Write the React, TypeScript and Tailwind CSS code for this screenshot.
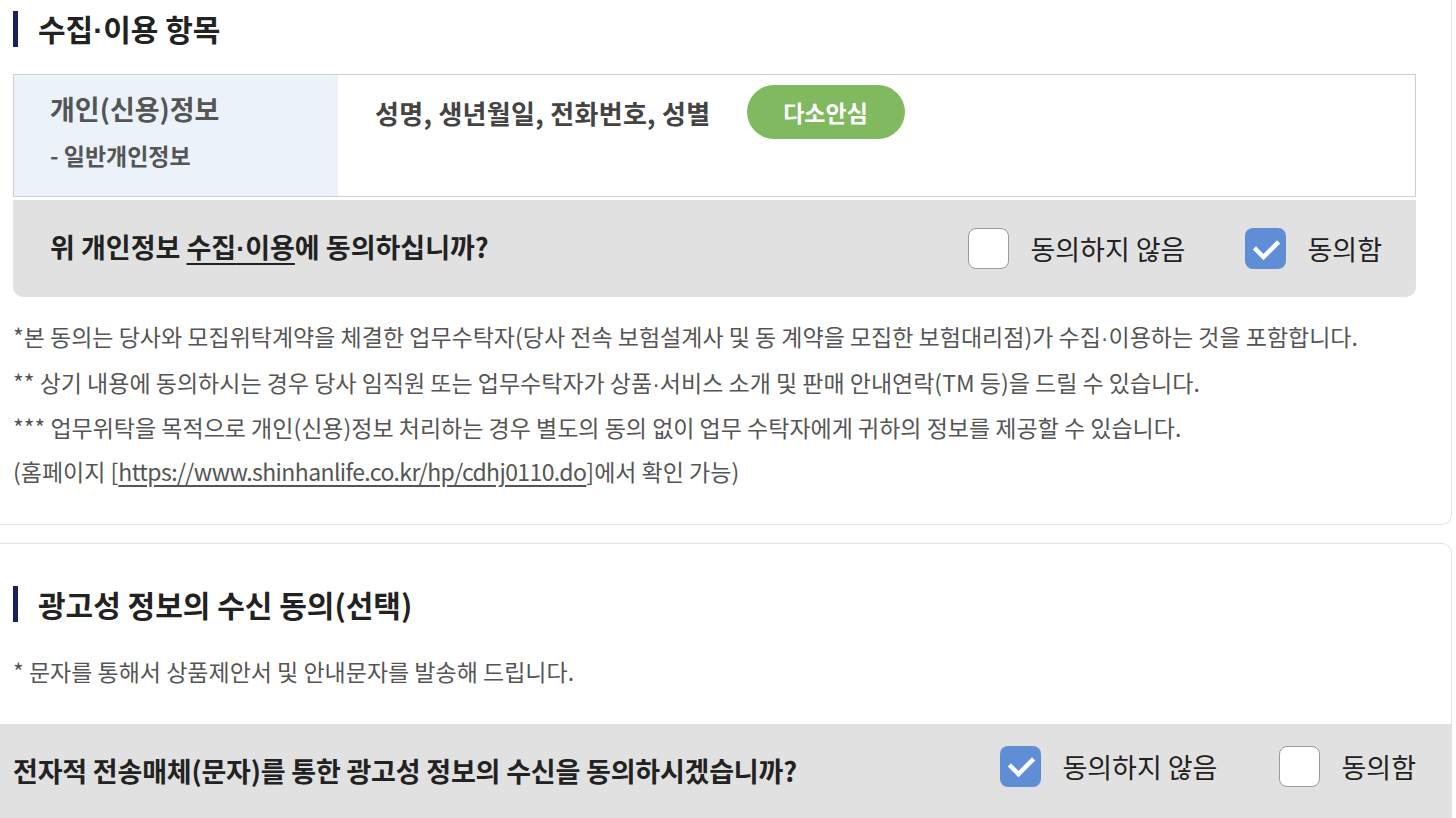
import React from 'react';

function Dot() {
  return <span className="font-['Liberation_Sans',sans-serif]">·</span>;
}

function CheckBox({ checked }: { checked: boolean }) {
  if (checked) {
    return (
      <span className="flex h-[41px] w-[41px] shrink-0 items-center justify-center rounded-[8px] bg-[#608ed6]">
        <svg className="h-[30px] w-[30px]" viewBox="0 0 30 30" fill="none" stroke="#ffffff" strokeWidth={4.5} strokeLinecap="square">
          <path d="M5 15.5l7.5 7.5L26 9.5" />
        </svg>
      </span>
    );
  }
  return <span className="h-[41px] w-[41px] shrink-0 rounded-[8px] border border-[#9a9a9a] bg-white" />;
}

function ConsentOption({ checked, label }: { checked: boolean; label: string }) {
  return (
    <label className="flex items-center gap-[21px]">
      <CheckBox checked={checked} />
      <span className="text-[27px] leading-none text-[#222]">{label}</span>
    </label>
  );
}

function SectionTitle({ children }: { children: React.ReactNode }) {
  return (
    <div className="flex items-center gap-[20px]">
      <span className="h-[36px] w-[5px] bg-[#1b1f5f]" />
      <h2 className="text-[30px] font-bold leading-none text-[#222]">{children}</h2>
    </div>
  );
}

export default function App() {
  return (
    <div className="h-[818px] w-full overflow-hidden bg-white font-['Noto_Sans_CJK_KR','Noto_Sans',sans-serif]">
      {/* 수집·이용 항목 */}
      <section className="mr-[4px] rounded-br-[10px] border-r border-b border-[#e3e3e3] pt-[11px] pb-[30px] pl-[13px] pr-[35px]">
        <SectionTitle>
          수집<Dot />이용 항목
        </SectionTitle>

        <div className="mt-[27px] flex h-[123px] border border-[#cfcfcf]">
          <div className="w-[324px] bg-[#ebf2fa] pl-[36px] pt-[17px]">
            <p className="text-[27px] font-bold leading-[34px] text-[#555]">개인(신용)정보</p>
            <p className="mt-[14px] text-[23px] font-bold leading-[30px] text-[#555]">- 일반개인정보</p>
          </div>
          <div className="flex items-start pl-[37px] pt-[10px]">
            <div className="flex items-center gap-[36px]">
              <span className="text-[26px] font-bold tracking-[0.3px] text-[#444]">성명, 생년월일, 전화번호, 성별</span>
              <span className="flex h-[54px] w-[158px] items-center justify-center rounded-full bg-[#80b960] text-[23px] font-bold text-white">
                다소안심
              </span>
            </div>
          </div>
        </div>

        <div className="mt-[3px] flex h-[97px] items-center justify-between rounded-b-[10px] bg-[#e1e1e1] pl-[37px] pr-[34px]">
          <p className="text-[27px] font-bold text-[#222]">
            위 개인정보{' '}
            <span className="underline decoration-[2px] underline-offset-[5px]">
              수집<Dot />이용
            </span>
            에 동의하십니까?
          </p>
          <div className="flex items-center gap-[60px]">
            <ConsentOption checked={false} label="동의하지 않음" />
            <ConsentOption checked={true} label="동의함" />
          </div>
        </div>

        <div className="mt-[18px] text-[23px] leading-[43.7px] text-[#555]">
          <p>
            *본 동의는 당사와 모집위탁계약을 체결한 업무수탁자(당사 전속 보험설계사 및 동 계약을 모집한 보험대리점)가 수집<Dot />이용하는 것을 포함합니다.
          </p>
          <p>
            ** 상기 내용에 동의하시는 경우 당사 임직원 또는 업무수탁자가 상품<Dot />서비스 소개 및 판매 안내연락(TM 등)을 드릴 수 있습니다.
          </p>
          <p>*** 업무위탁을 목적으로 개인(신용)정보 처리하는 경우 별도의 동의 없이 업무 수탁자에게 귀하의 정보를 제공할 수 있습니다.</p>
          <p>
            (홈페이지 [
            <span className="tracking-[-0.6px] underline underline-offset-[4px]">https://www.shinhanlife.co.kr/hp/cdhj0110.do</span>
            ]에서 확인 가능)
          </p>
        </div>
      </section>

      {/* 광고성 정보의 수신 동의 */}
      <section className="mt-[18px] mr-[4px] rounded-tr-[10px] border-t border-r border-[#e3e3e3] pt-[42px]">
        <div className="pl-[13px]">
          <SectionTitle>광고성 정보의 수신 동의(선택)</SectionTitle>
          <p className="mt-[27px] text-[23px] leading-[44px] text-[#555]">* 문자를 통해서 상품제안서 및 안내문자를 발송해 드립니다.</p>
        </div>

        <div className="mt-[31px] flex h-[100px] items-start justify-between bg-[#e1e1e1] pl-[13px] pr-[35px] pt-[22px]">
          <p className="pt-[5px] text-[27px] font-bold tracking-[-0.2px] text-[#222]">
            전자적 전송매체(문자)를 통한 광고성 정보의 수신을 동의하시겠습니까?
          </p>
          <div className="flex items-center gap-[62px]">
            <ConsentOption checked={true} label="동의하지 않음" />
            <ConsentOption checked={false} label="동의함" />
          </div>
        </div>
      </section>
    </div>
  );
}
